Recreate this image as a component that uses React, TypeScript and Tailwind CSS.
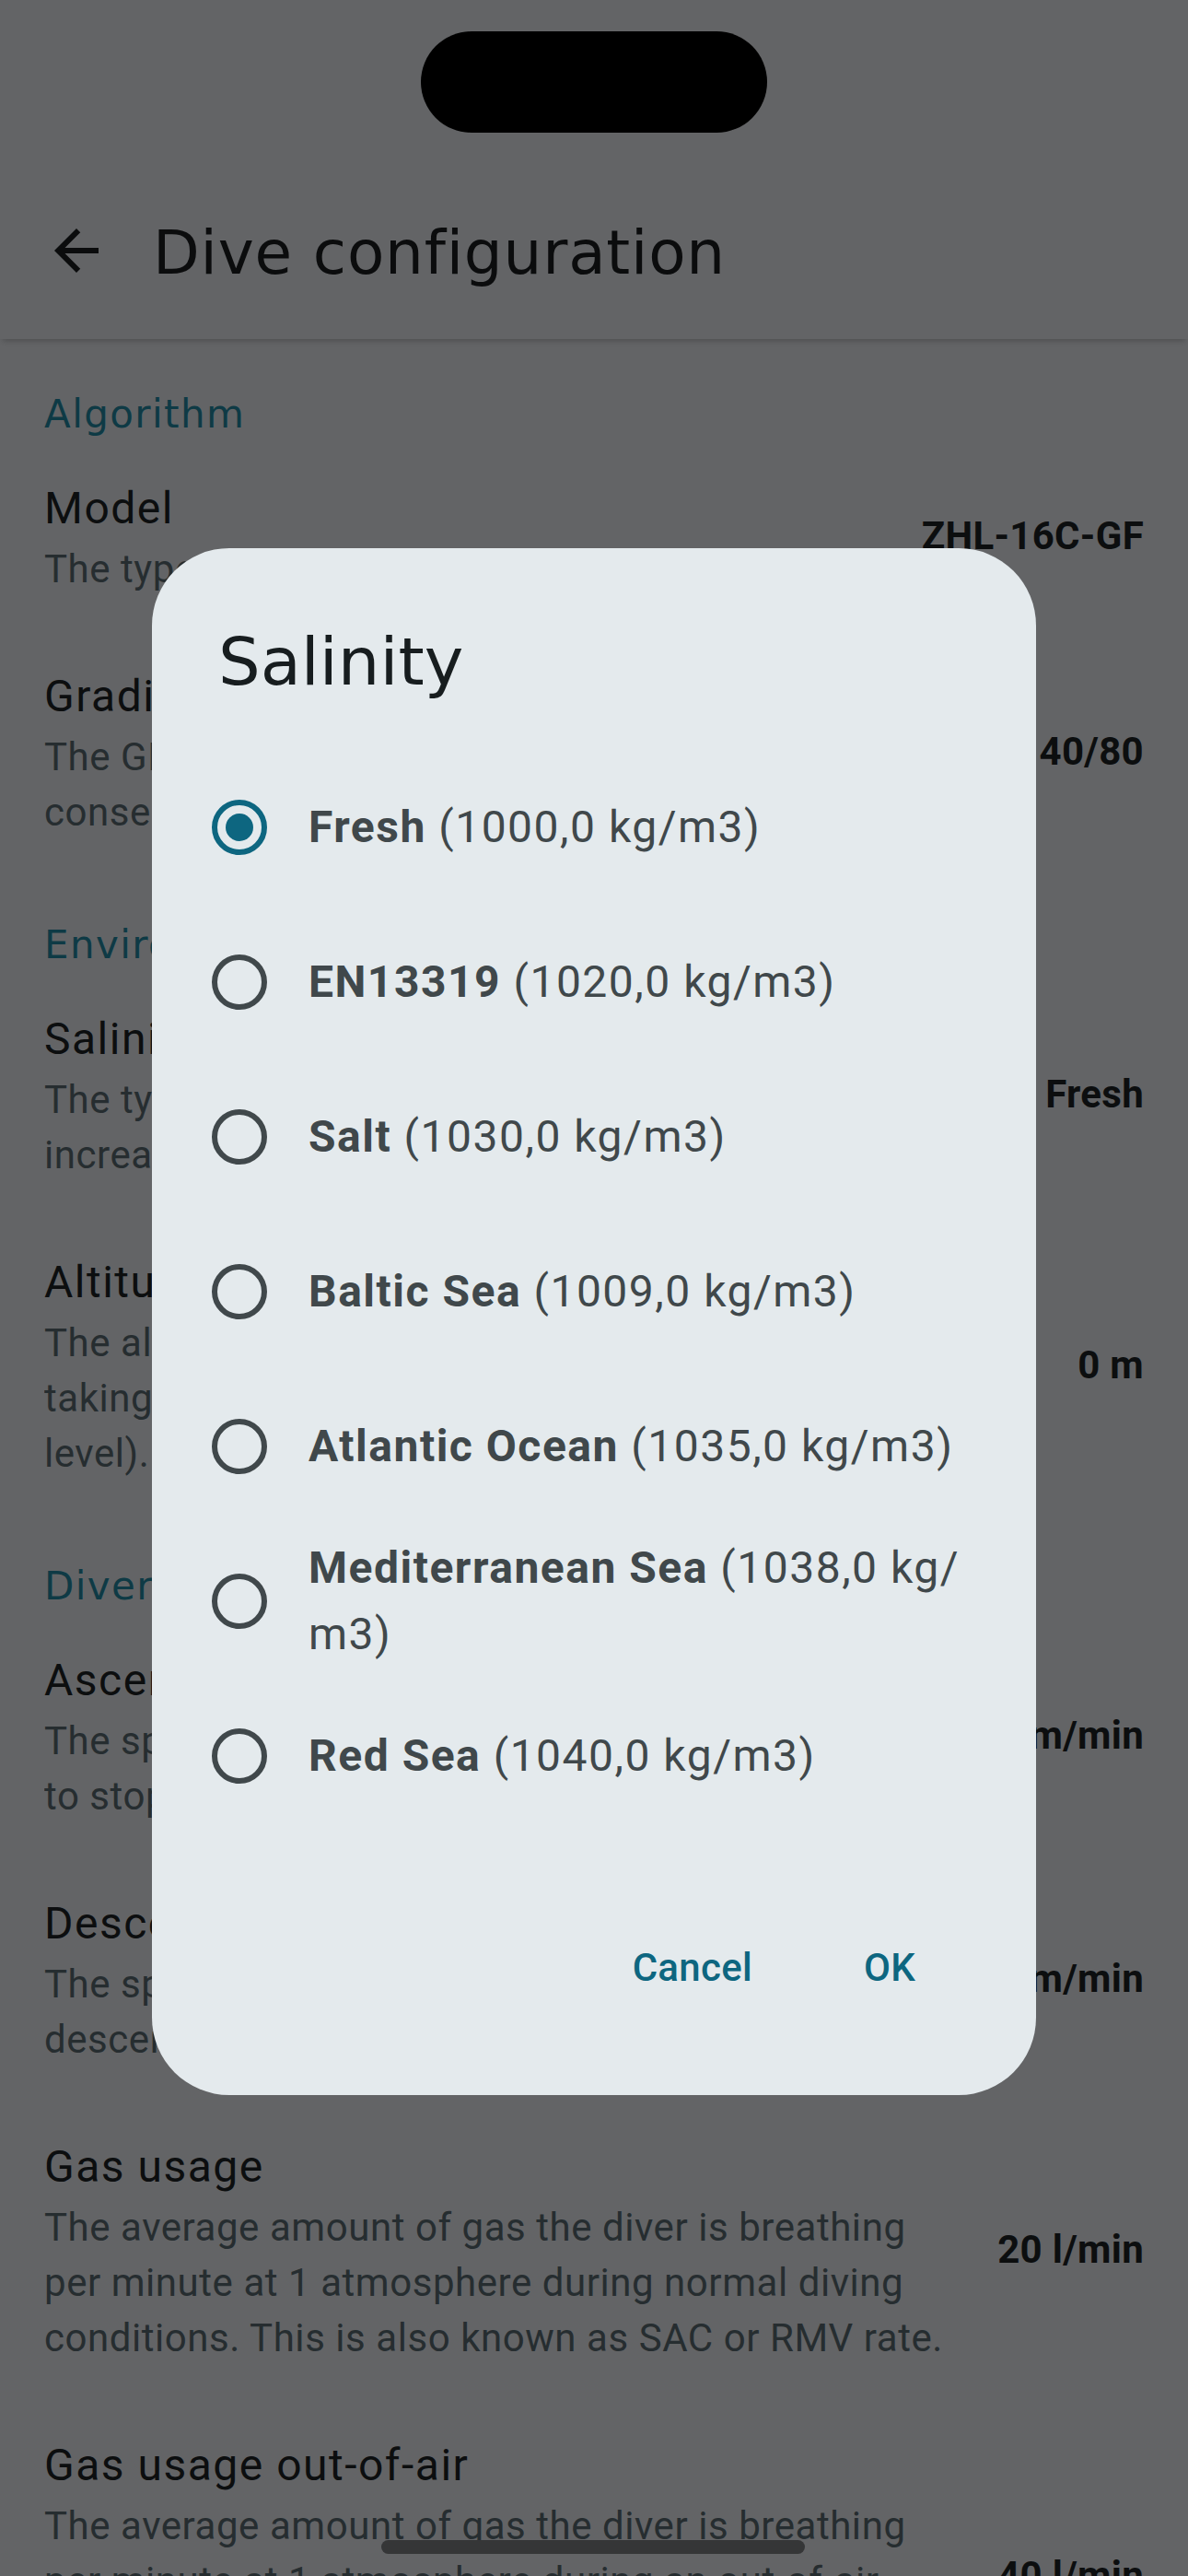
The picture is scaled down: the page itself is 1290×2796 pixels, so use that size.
import React from "react";

type Item = { title: string; lines: string[]; value: string };
type Section = { header: string; items: Item[] };

const sections: Section[] = [
  {
    header: "Algorithm",
    items: [
      { title: "Model", lines: ["The type of decompression model used."], value: "ZHL-16C-GF" },
      {
        title: "Gradient factors",
        lines: ["The GF low and high values. Lower values are more", "conservative and result in longer decompression."],
        value: "40/80",
      },
    ],
  },
  {
    header: "Environment",
    items: [
      {
        title: "Salinity",
        lines: ["The type of water, which affects the pressure", "increase with depth."],
        value: "Fresh",
      },
      {
        title: "Altitude",
        lines: [
          "The altitude of the dive site, used for",
          "taking into account the lower pressure (above sea",
          "level).",
        ],
        value: "0 m",
      },
    ],
  },
  {
    header: "Diver",
    items: [
      {
        title: "Ascent rate",
        lines: ["The speed at which the diver ascends from depth", "to stops and the surface."],
        value: "10 m/min",
      },
      {
        title: "Descent rate",
        lines: ["The speed at which the diver descends during the", "descent phase of the dive."],
        value: "20 m/min",
      },
      {
        title: "Gas usage",
        lines: [
          "The average amount of gas the diver is breathing",
          "per minute at 1 atmosphere during normal diving",
          "conditions. This is also known as SAC or RMV rate.",
        ],
        value: "20 l/min",
      },
      {
        title: "Gas usage out-of-air",
        lines: [
          "The average amount of gas the diver is breathing",
          "per minute at 1 atmosphere during an out-of-air",
          "situation. This is used to calculate the gas",
          "reserve.",
        ],
        value: "40 l/min",
      },
    ],
  },
];

type Option = { name: string; density: string; selected?: boolean; twoLine?: boolean };

const options: Option[] = [
  { name: "Fresh", density: "(1000,0 kg/m3)", selected: true },
  { name: "EN13319", density: "(1020,0 kg/m3)" },
  { name: "Salt", density: "(1030,0 kg/m3)" },
  { name: "Baltic Sea", density: "(1009,0 kg/m3)" },
  { name: "Atlantic Ocean", density: "(1035,0 kg/m3)" },
  { name: "Mediterranean Sea", density: "(1038,0 kg/m3)", twoLine: true },
  { name: "Red Sea", density: "(1040,0 kg/m3)" },
];

function ArrowBack() {
  return (
    <svg width="72" height="72" viewBox="0 0 24 24" className="shrink-0">
      <path d="M20 11H7.83l5.59-5.59L12 4l-8 8 8 8 1.41-1.41L7.83 13H20v-2z" fill="#0b0c0d" />
    </svg>
  );
}

function Radio({ selected }: { selected?: boolean }) {
  if (selected) {
    return (
      <div className="w-[60px] h-[60px] shrink-0 rounded-full border-[6px] border-[#0d6680] flex items-center justify-center">
        <div className="w-[30px] h-[30px] rounded-full bg-[#0d6680]" />
      </div>
    );
  }
  return <div className="w-[60px] h-[60px] shrink-0 rounded-full border-[6px] border-[#40484b]" />;
}

function SettingItem({ item }: { item: Item }) {
  return (
    <div className="flex items-center gap-[48px] px-[48px] py-[36px]">
      <div className="flex-1 min-w-0 overflow-hidden">
        <div className="text-[48px] leading-[72px] tracking-[1.5px] text-[#0c0e0f] whitespace-nowrap">{item.title}</div>
        {item.lines.map((l, i) => (
          <div key={i} className="text-[42px] leading-[60px] tracking-[0.55px] text-[#262d30] whitespace-nowrap">
            {l}
          </div>
        ))}
      </div>
      <div className="shrink-0 text-[42px] leading-[60px] tracking-[0.3px] font-bold text-[#0c0e0f] whitespace-nowrap">
        {item.value}
      </div>
    </div>
  );
}

export default function App() {
  return (
    <div className="relative w-[1290px] h-[2796px] overflow-hidden bg-[#636466] font-['Roboto',sans-serif]">
      {/* status bar */}
      <div className="h-[176px] flex justify-center pt-[34px]">
        <div className="w-[376px] h-[110px] rounded-full bg-black" />
      </div>
      {/* top app bar */}
      <div className="relative z-10 h-[192px] flex items-center pl-[47px] bg-[#636466] shadow-[0_5px_6px_-3px_rgba(0,0,0,0.22)]">
        <ArrowBack />
        <div className="ml-[47px] mt-[6px] font-['DejaVu_Sans',sans-serif] text-[66px] leading-[80px] tracking-[0.8px] text-[#0b0c0d] whitespace-nowrap">
          Dive configuration
        </div>
      </div>
      {/* list */}
      <div>
        {sections.map((s, si) => (
          <div key={s.header}>
            <div
              className={`${si === 0 ? "pt-[52px]" : "pt-[48px]"} px-[48px] font-['DejaVu_Sans',sans-serif] text-[42px] leading-[60px] tracking-[1.4px] text-[#0e3a45]`}
            >
              {s.header}
            </div>
            {s.items.map((it) => (
              <SettingItem key={it.title} item={it} />
            ))}
          </div>
        ))}
      </div>

      {/* dialog */}
      <div className="absolute left-[165px] top-[595px] w-[960px] h-[1679px] rounded-[84px] bg-[#e4eaed] flex flex-col px-[72px] pt-[75px] pb-[78px] z-20">
        <div className="font-['DejaVu_Sans',sans-serif] text-[72px] leading-[96px] text-[#171d1f]">Salinity</div>
        <div className="mt-[48px] flex flex-col">
          {options.map((o) => (
            <div key={o.name} className="h-[168px] flex items-center">
              <div className="-ml-[7px]">
                <Radio selected={o.selected} />
              </div>
              <div className="ml-[45px] flex-1 text-[48px] leading-[72px] tracking-[1.5px] text-[#40484b]">
                <span className="font-bold">{o.name}</span>{" "}
                {o.twoLine ? (
                  <>
                    (1038,0 kg/
                    <br />
                    m3)
                  </>
                ) : (
                  o.density
                )}
              </div>
            </div>
          ))}
        </div>
        <div className="flex-1" />
        <div className="flex justify-end gap-[26px]">
          <div className="min-w-[174px] h-[120px] px-[36px] flex items-center justify-center text-[42px] leading-[60px] tracking-[0.3px] font-medium text-[#0d6680]">
            Cancel
          </div>
          <div className="min-w-[174px] h-[120px] px-[36px] flex items-center justify-center text-[42px] leading-[60px] tracking-[0.3px] font-medium text-[#0d6680]">
            OK
          </div>
        </div>
      </div>

      {/* home indicator */}
      <div className="absolute left-[414px] top-[2757px] w-[460px] h-[15px] rounded-full bg-[#353637] z-30" />
    </div>
  );
}
